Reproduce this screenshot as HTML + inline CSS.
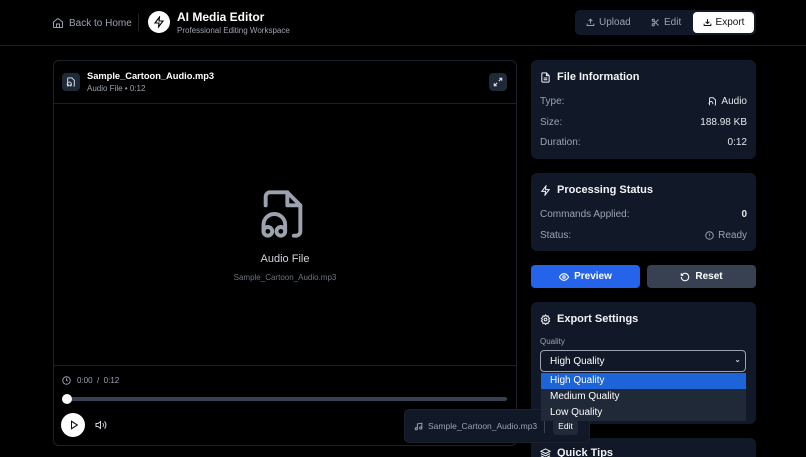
<!DOCTYPE html>
<html style="overflow:hidden;height:457px"><head><meta charset="utf-8"><style>
*{box-sizing:border-box;margin:0;padding:0}
body{width:806px;height:457px;overflow:hidden;background:#000;font-family:"Liberation Sans",sans-serif;color:#fff;position:relative}
.abs{position:absolute}
svg{display:block}
.card{position:absolute;background:#111827;border-radius:6px}
.row{position:absolute;left:9px;right:9px;display:flex;justify-content:space-between;align-items:center;font-size:10px;color:#9ca3af}
.row b{color:#e5e7eb;font-weight:normal;display:flex;align-items:center;gap:4px}
.h{position:absolute;left:9px;display:flex;align-items:center;gap:6px;font-size:11px;font-weight:bold;color:#f3f4f6}
</style></head><body>
<div class="abs" style="left:0;top:45px;width:806px;height:1px;background:#1a1f29"></div>
<div class="abs" style="left:52px;top:17px;display:flex;align-items:center;gap:5px;font-size:10px;color:#9ca3af">
<svg width="12" height="12" viewBox="0 0 24 24" fill="none" stroke="#9ca3af" stroke-width="2"><path d="M3 10l9-7 9 7v10a1 1 0 0 1-1 1H4a1 1 0 0 1-1-1z"/><path d="M9 21v-7h6v7"/></svg>Back to Home</div>
<div class="abs" style="left:138px;top:14px;width:1px;height:17px;background:#222"></div>
<div class="abs" style="left:148px;top:11px;width:22px;height:22px;border-radius:50%;background:#fff"><svg style="margin:5px" width="12" height="12" viewBox="0 0 24 24" fill="none" stroke="#000" stroke-width="2.2"><path d="M13 2L4 14h8l-1 8 9-12h-8z"/></svg></div>
<div class="abs" style="left:177px;top:10px;font-size:12px;font-weight:bold">AI Media Editor</div>
<div class="abs" style="left:177px;top:26px;font-size:8px;color:#9ca3af">Professional Editing Workspace</div>
<div class="abs" style="left:575px;top:10px;width:181px;height:25px;background:#111827;border-radius:5px"></div>
<div class="abs" style="left:586px;top:17px;font-size:10px;color:#9ca3af;display:flex;align-items:center;gap:4px"><svg width="9" height="9" viewBox="0 0 24 24" fill="none" stroke="#9ca3af" stroke-width="2.5"><path d="M12 15V3M7 8l5-5 5 5M3 15v5h18v-5"/></svg>Upload</div>
<div class="abs" style="left:651px;top:17px;font-size:10px;color:#9ca3af;display:flex;align-items:center;gap:4px"><svg width="9" height="9" viewBox="0 0 24 24" fill="none" stroke="#9ca3af" stroke-width="2.5"><circle cx="6" cy="6" r="3"/><circle cx="6" cy="18" r="3"/><path d="M8 8l12 12M8 16L20 4"/></svg>Edit</div>
<div class="abs" style="left:693px;top:12px;width:61px;height:21px;background:#fff;border-radius:4px;font-size:10px;color:#111;display:flex;align-items:center;justify-content:center;gap:4px"><svg width="9" height="9" viewBox="0 0 24 24" fill="none" stroke="#111" stroke-width="2.5"><path d="M12 3v12M7 10l5 5 5-5M3 15v5h18v-5"/></svg>Export</div>
<div class="abs" style="left:53px;top:60px;width:464px;height:386px;border:1px solid #1c222c;border-radius:6px"></div>
<div class="abs" style="left:54px;top:103px;width:462px;height:1px;background:#1c222c"></div>
<div class="abs" style="left:54px;top:365px;width:462px;height:1px;background:#1c222c"></div>
<div class="abs" style="left:62px;top:73px;width:18px;height:18px;border-radius:4px;background:#1f2937"><svg style="margin:4px" width="10" height="10" viewBox="0 0 24 24" fill="none" stroke="#cbd5e1" stroke-width="2.5"><path d="M4 22V4a2 2 0 0 1 2-2h8l6 6v12a2 2 0 0 1-2 2"/><path d="M3 19v-2a5 5 0 0 1 10 0v2"/><circle cx="5" cy="20" r="1.5"/><circle cx="11" cy="20" r="1.5"/></svg></div>
<div class="abs" style="left:87px;top:71px;font-size:9.3px;font-weight:bold">Sample_Cartoon_Audio.mp3</div>
<div class="abs" style="left:87px;top:84px;font-size:8px;color:#9ca3af">Audio File • 0:12</div>
<div class="abs" style="left:489px;top:73px;width:18px;height:18px;border-radius:4px;background:#1f2937"><svg style="margin:4px" width="10" height="10" viewBox="0 0 24 24" fill="none" stroke="#e5e7eb" stroke-width="2.5"><path d="M15 3h6v6M9 21H3v-6M21 3l-7 7M3 21l7-7"/></svg></div>
<svg class="abs" style="left:257px;top:188px" width="52" height="52" viewBox="0 0 24 24" fill="none" stroke="#9ca3af" stroke-width="1.8" stroke-linecap="round" stroke-linejoin="round"><path d="M4 8V4a2 2 0 0 1 2-2h8l6 6v12a2 2 0 0 1-2 2h-1"/><path d="M14 2v6h6"/><path d="M3 20v-3a5 5 0 0 1 10 0v3"/><circle cx="5" cy="20" r="2"/><circle cx="11" cy="20" r="2"/></svg>
<div class="abs" style="left:185px;top:253px;width:200px;text-align:center;font-size:11px;color:#d1d5db">Audio File</div>
<div class="abs" style="left:185px;top:273px;width:200px;text-align:center;font-size:8px;color:#6b7280">Sample_Cartoon_Audio.mp3</div>
<div class="abs" style="left:62px;top:376px;font-size:8px;color:#9ca3af;display:flex;align-items:center;gap:6px"><svg width="9" height="9" viewBox="0 0 24 24" fill="none" stroke="#9ca3af" stroke-width="2.5"><circle cx="12" cy="12" r="10"/><path d="M12 6v6l4 2"/></svg>0:00 &nbsp;/ &nbsp;0:12</div>
<div class="abs" style="left:63px;top:397px;width:444px;height:4px;border-radius:2px;background:#374151"></div>
<div class="abs" style="left:62px;top:394px;width:10px;height:10px;border-radius:50%;background:#fff"></div>
<div class="abs" style="left:61px;top:413px;width:24px;height:24px;border-radius:50%;background:#fff"><svg style="margin:7px 0 0 8px" width="10" height="10" viewBox="0 0 24 24" fill="none" stroke="#111" stroke-width="2.5"><path d="M6 3l14 9-14 9z"/></svg></div>
<svg class="abs" style="left:95px;top:419px" width="12" height="12" viewBox="0 0 24 24" fill="none" stroke="#d1d5db" stroke-width="2"><path d="M11 5L6 9H2v6h4l5 4z"/><path d="M15.5 8.5a5 5 0 0 1 0 7M19 5a10 10 0 0 1 0 14"/></svg>
<div class="card" style="left:531px;top:60px;width:225px;height:99px">
<div class="h" style="top:11px"><svg width="11" height="11" viewBox="0 0 24 24" fill="none" stroke="#f3f4f6" stroke-width="2.2"><path d="M14 2H6a2 2 0 0 0-2 2v16a2 2 0 0 0 2 2h12a2 2 0 0 0 2-2V8z"/><path d="M14 2v6h6M8 13h8M8 17h8"/></svg>File Information</div>
<div class="row" style="top:36px">Type:<b><svg width="9" height="9" viewBox="0 0 24 24" fill="none" stroke="#e5e7eb" stroke-width="2.5"><path d="M4 22V4a2 2 0 0 1 2-2h8l6 6v12a2 2 0 0 1-2 2"/><path d="M3 19v-2a5 5 0 0 1 10 0v2"/></svg>Audio</b></div>
<div class="row" style="top:57px">Size:<b>188.98 KB</b></div>
<div class="row" style="top:77px">Duration:<b>0:12</b></div>
</div>
<div class="card" style="left:531px;top:173px;width:225px;height:78px">
<div class="h" style="top:11px"><svg width="11" height="11" viewBox="0 0 24 24" fill="none" stroke="#f3f4f6" stroke-width="2.2"><path d="M13 2L4 14h8l-1 8 9-12h-8z"/></svg>Processing Status</div>
<div class="row" style="top:36px">Commands Applied:<b style="font-weight:bold">0</b></div>
<div class="row" style="top:57px">Status:<b style="color:#9ca3af"><svg width="9" height="9" viewBox="0 0 24 24" fill="none" stroke="#9ca3af" stroke-width="2.5"><circle cx="12" cy="12" r="10"/><path d="M12 7v6M12 16v1"/></svg>Ready</b></div>
</div>
<div class="abs" style="left:531px;top:265px;width:109px;height:23px;border-radius:4px;background:#2563eb;font-size:10px;font-weight:bold;display:flex;align-items:center;justify-content:center;gap:5px"><svg width="10" height="10" viewBox="0 0 24 24" fill="none" stroke="#fff" stroke-width="2.5"><path d="M1 12s4-8 11-8 11 8 11 8-4 8-11 8S1 12 1 12z"/><circle cx="12" cy="12" r="3"/></svg>Preview</div>
<div class="abs" style="left:647px;top:265px;width:109px;height:23px;border-radius:4px;background:#374151;font-size:10px;font-weight:bold;display:flex;align-items:center;justify-content:center;gap:5px"><svg width="10" height="10" viewBox="0 0 24 24" fill="none" stroke="#fff" stroke-width="2.5"><path d="M3 12a9 9 0 1 0 3-6.7L3 8M3 3v5h5"/></svg>Reset</div>
<div class="card" style="left:531px;top:302px;width:225px;height:122px">
<div class="h" style="top:11px"><svg width="11" height="11" viewBox="0 0 24 24" fill="none" stroke="#f3f4f6" stroke-width="2.2"><circle cx="12" cy="12" r="3"/><path d="M12 2l2 3 3.5-1 .5 3.5 3 2-2 3 2 3-3 2-.5 3.5-3.5-1-2 3-2-3-3.5 1-.5-3.5-3-2 2-3-2-3 3-2 .5-3.5 3.5 1z"/></svg>Export Settings</div>
<div class="abs" style="left:9px;top:35px;font-size:8px;color:#9ca3af">Quality</div>
</div>
<div class="card" style="left:531px;top:438px;width:225px;height:19px;border-radius:6px 6px 0 0"><div class="h" style="top:9px"><svg width="11" height="11" viewBox="0 0 24 24" fill="none" stroke="#f3f4f6" stroke-width="2.2"><path d="M12 2L2 7l10 5 10-5zM2 12l10 5 10-5M2 17l10 5 10-5"/></svg>Quick Tips</div></div>
<div class="abs" style="left:404px;top:409px;width:186px;height:34px;border-radius:5px;background:#111827;border:1px solid #1c222c"></div>
<div class="abs" style="left:414px;top:421px;font-size:8.5px;color:#9ca3af;display:flex;align-items:center;gap:5px"><svg width="9" height="9" viewBox="0 0 24 24" fill="none" stroke="#9ca3af" stroke-width="2.5"><path d="M9 18V5l12-2v13"/><circle cx="6" cy="18" r="3"/><circle cx="18" cy="16" r="3"/></svg>Sample_Cartoon_Audio.mp3</div>
<div class="abs" style="left:544px;top:419px;width:1px;height:14px;background:#374151"></div>
<div class="abs" style="left:553px;top:417px;width:25px;height:18px;border-radius:3px;background:#1f2937;font-size:8.5px;display:flex;align-items:center;justify-content:center">Edit</div>
<div class="abs" style="left:540px;top:350px;width:206px;height:22px;border:1px solid #9ca3af;border-radius:4px;background:#111827;font-size:10px;padding:5px 0 0 9px">High Quality<span style="position:absolute;right:4px;top:4px;font-size:8px">⌄</span></div>
<div class="abs" style="left:541px;top:373px;width:205px;height:48px;background:#1f2937;font-size:10px">
<div style="height:16px;background:#1d64d8;padding:2px 0 0 9px">High Quality</div>
<div style="height:16px;padding:2px 0 0 9px">Medium Quality</div>
<div style="height:16px;padding:2px 0 0 9px">Low Quality</div>
</div>
</body></html>
